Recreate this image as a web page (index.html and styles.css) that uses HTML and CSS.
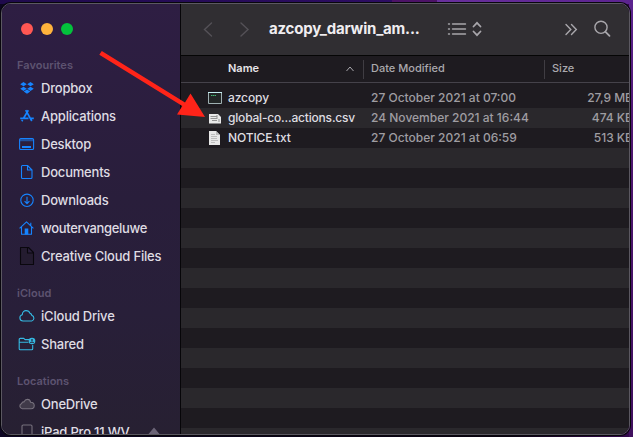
FILE: index.html
```
<!DOCTYPE html>
<html lang="en">
<head>
<meta charset="utf-8">
<title>azcopy_darwin_am...</title>
<link rel="stylesheet" href="styles.css">
</head>
<body>
<div class="window">
  <aside class="sidebar">
    <div class="lights"><i class="red"></i><i class="amber"></i><i class="green"></i></div>
    <h2>Favourites</h2>
    <ul>
      <li><svg class="blue" viewBox="0 0 16 16"><path fill="currentColor" d="M4.500 2 7.800 4.200 4.500 6.300 1.200 4.200zM11.500 2l3.300 2.200-3.300 2.100-3.300-2.100zM4.500 6.700 7.800 8.800 4.500 11 1.200 8.800zM11.500 6.700l3.300 2.100-3.300 2.200-3.300-2.200zM4.700 11.600 8 9.500l3.300 2.100L8 13.700z"/></svg><span>Dropbox</span></li>
      <li><svg class="blue" viewBox="0 0 16 16"><path class="ln b" d="M9.300 2.200 4.700 10M6.700 2.200 12.800 13M1.200 10.300h8.300M12 10.300h2.800M3.600 12l-.8 1.300"/></svg><span>Applications</span></li>
      <li><svg class="blue" viewBox="0 0 16 16"><rect class="ln" x=".6" y="2.500" width="14" height="11" rx="1.300"/><path fill="currentColor" opacity=".5" d="M1 3h13.400v2.200H1z"/><path fill="currentColor" d="M3 10h9v2H3z"/></svg><span>Desktop</span></li>
      <li><svg class="blue" viewBox="0 0 16 16"><path class="ln" d="M3.500 1.500h5L13 6v7.500a1 1 0 0 1-1 1H3.500a1 1 0 0 1-1-1v-11a1 1 0 0 1 1-1zM8.500 1.500V6H13"/></svg><span>Documents</span></li>
      <li><svg class="blue" viewBox="0 0 16 16"><circle class="ln" cx="8" cy="8.300" r="6.200"/><path class="ln" d="M8 4.800v6.700M5.600 9.200 8 11.600l2.400-2.400"/></svg><span>Downloads</span></li>
      <li><svg class="blue" viewBox="0 0 16 16"><path class="ln" d="M.6 8.300 7.500 1.800l6.900 6.500M2.500 7v7.300h10V7M11.800 5.500V2.700"/><path fill="currentColor" d="M5.700 8.500h3.600v6H5.700z"/></svg><span class="tight">woutervangeluwe</span></li>
      <li><svg class="black" viewBox="0 0 16 16"><path class="ln" d="M1.500-.5h8l5 5v12h-13zM8.500-.5v5.500h6"/></svg><span>Creative Cloud Files</span></li>
    </ul>
    <h2>iCloud</h2>
    <ul>
      <li><svg class="cyan" viewBox="0 0 16 16"><path class="ln" d="M4 13a3.200 3.200 0 0 1-.7-6.300C3.300 3.800 5.300 2.600 7 2.600c2 0 3.400 1 4 2.800 1.300.1 1.700 1 1.800 2A2.900 2.900 0 0 1 12.700 13z"/></svg><span>iCloud Drive</span></li>
      <li><svg class="cyan" viewBox="0 0 16 16"><path class="ln" d="M10 3.600H6L4.800 2.400H1.200a1 1 0 0 0-1 1v9.300a1 1 0 0 0 1 1h11.500a1 1 0 0 0 1-1V9M.2 6.200H9.500"/><circle fill="currentColor" cx="13" cy="5" r="3.300"/><path d="M13 3v2M11.400 7q1.600-2 3.200 0" fill="none" stroke="#281f38" stroke-width="1.200"/></svg><span>Shared</span></li>
    </ul>
    <h2>Locations</h2>
    <ul>
      <li><svg class="grey" viewBox="0 0 16 16"><path class="cloud" d="M3.200 12.800a2.800 2.800 0 0 1-.5-5.400c.3-1.200 1.500-1.600 2.300-1.500.8-1.800 2-2.500 3.300-2.500 1.700 0 3 1 3.300 2.900 2.200 0 3.600 1.300 3.600 3.300 0 1.900-1.200 3.200-3 3.200z"/></svg><span>OneDrive</span></li>
      <li><svg class="grey" viewBox="0 0 16 16"><rect class="ln" x="3" y="1" width="10" height="14" rx="1.200"/></svg><span>iPad Pro 11 WV</span><svg class="eject" viewBox="0 0 12 12"><path fill="#6b6477" d="m6 1.500 5.500 6.500H.5zM1 9.500h10v2H1z"/></svg></li>
    </ul>
  </aside>
  <main>
    <header class="toolbar">
      <svg class="nav" viewBox="0 0 50 20"><path d="M8.500 4 1.500 10.500l7 6.500M38 4l7 6.500-7 6.500"/></svg>
      <h1>azcopy_darwin_am...</h1>
      <svg class="view" viewBox="0 0 36 20"><path d="M5.500 5h13M5.500 10h13M5.500 15h13M1.500 5h1M1.500 10h1M1.500 15h1"/><path class="w" d="M26.500 7.500 30 3.800 33.500 7.500M26.500 12.500l3.500 3.700 3.500-3.700"/></svg>
      <svg class="more" viewBox="0 0 14 20"><path d="m2 5.500 4.800 5-4.800 5M7.500 5.500l4.800 5-4.800 5"/></svg>
      <svg class="search" viewBox="0 0 20 20"><circle cx="8" cy="8.300" r="6.100"/><path class="w" d="m12.500 12.800 4 4"/></svg>
    </header>
    <div class="cols head">
      <div class="name"><b>Name</b><svg viewBox="0 0 8 6"><path d="m.5 5 3.500-4 3.500 4"/></svg></div>
      <div class="date"><span>Date Modified</span></div>
      <div class="size"><span>Size</span></div>
    </div>
    <div class="rows">
      <div class="cols row">
        <div class="name"><svg viewBox="0 0 14 14"><path fill="#222626" stroke="#9fb0b2" d="M.5 1.500h13v11H.5z"/><path stroke="#c5edf2" d="M0 1.500h14"/><path stroke="#45b875" stroke-dasharray="1.500 .5" d="M3 4.500h5"/></svg><span>azcopy</span></div>
        <div class="date"><span>27 October 2021 at 07:00</span></div><div class="size"><span>27,9 MB</span></div>
      </div>
      <div class="cols row">
        <div class="name"><svg viewBox="0 0 14 14"><path fill="#e9e9e9" d="M1 3h9l3 3v6.500H1z"/><path stroke="#939393" d="M2.500 5.500H9M2.500 7.500h7M4 9.500h5M11 8v3M9 4v3"/></svg><span class="tight">global-co...actions.csv</span></div>
        <div class="date"><span>24 November 2021 at 16:44</span></div><div class="size"><span>474 KB</span></div>
      </div>
      <div class="cols row">
        <div class="name"><svg viewBox="0 0 14 14"><path fill="#e8e8e8" d="M1 0h7l4 4v10H1z"/><path fill="#bbb" d="M8 0v4h4z"/><path stroke="#aaa" stroke-width=".7" d="M3 3.500h4M3 5.500h6M3 7.500h6M3 9.500h7M3 11.500h4"/></svg><span>NOTICE.txt</span></div>
        <div class="date"><span>27 October 2021 at 06:59</span></div><div class="size"><span>513 KB</span></div>
      </div>
    </div>
  </main>
</div>
<svg class="arrow" viewBox="0 0 633 437"><path fill="#ff2419" d="m101.800 51 83.200 51.500 5.500-9 14.500 23.500-28-2.500 5.300-8.500L99.300 54.800z"/></svg>
</body>
</html>
```
FILE: styles.css
```
* { box-sizing: border-box; }
body {
  margin: 0;
  width: 633px;
  height: 437px;
  overflow: hidden;
  padding: 3px 3px 2px 1px;
  background: linear-gradient(90deg, #1f0a4c, #2c0c62 62%, #4c1266 62%, #4c1266 69%, #68309c 69%, #5b238f) 0 0 / 100% 4px no-repeat,
    linear-gradient(#5c248f, #4f1770 30%, #40105e) 100% 0 / 4px 100% no-repeat,
    linear-gradient(90deg, #0c0522, #08020f 80%, #34094d);
  font-family: Inter, "Liberation Sans", sans-serif;
  font-size: 13px;
  color: #dfdce3;
}
.window {
  display: flex;
  height: 432px;
  border: 1px solid #5b5861;
  border-radius: 10px;
  overflow: hidden;
  box-shadow: 0 0 0 1px #08060c;
}
h1, h2, ul { margin: 0; padding: 0; }
.sidebar {
  flex: none;
  width: 179px;
  border-right: 1px solid #060508;
  background: linear-gradient(180deg, #2e1e43, #291e3b 45%, #281f39 72%, #272032);
}
.lights { display: flex; gap: 8px; padding: 19px 0 0 19px; height: 51px; }
.lights i { width: 12px; height: 12px; border-radius: 50%; }
.red { background: #ff5753; }
.amber { background: #ffb33c; }
.green { background: #03c23c; }
h2 { height: 19px; margin-left: 15px; font-size: 11px; line-height: 20px; font-weight: 600; color: #5d5370; letter-spacing: .02px; }
ul { list-style: none; margin-bottom: 13px; }
li { display: flex; align-items: center; height: 28px; padding-left: 17px; gap: 6px; font-weight: 500; letter-spacing: -.2px; white-space: nowrap; }
li .tight { letter-spacing: -.33px; }
li svg { width: 16px; height: 16px; overflow: visible; flex: none; }
li .eject { width: 12px; height: 12px; margin-left: 12px; }
.ln { fill: none; stroke: currentColor; stroke-width: 1.1; stroke-linejoin: round; }
.cloud { fill: #403a49; stroke: currentColor; stroke-width: 1.1; }
.b { stroke-width: 1.7; }
.blue { color: #1684ff; }
.black { color: #09070d; }
.black .ln { fill: #241c30; }
.cyan { color: #35b9e2; }
.grey { color: #77717d; }
main { flex: 1; min-width: 0; display: flex; flex-direction: column; background: #1e1b20; }
.toolbar { flex: none; height: 52px; display: flex; align-items: center; border-bottom: 1px solid #050505; background: #302e32; padding: 0 0 2px 22px; }
.toolbar svg { height: 20px; fill: none; stroke: #a8a6ab; stroke-width: 1.4; stroke-linecap: round; flex: none; }
.toolbar .nav { width: 50px; stroke: #545157; }
.toolbar .w { stroke-width: 1.8; }
h1 { width: 151px; margin-left: 16px; font-size: 15px; font-weight: 700; letter-spacing: -.2px; white-space: nowrap; color: #efedf0; }
.view { width: 36px; margin-left: 27px; }
.more { width: 14px; margin-left: 81px; }
.search { width: 20px; margin-left: 15px; }
.cols { display: grid; grid-template-columns: 182px 181px 1fr; align-items: center; white-space: nowrap; }
.head { flex: none; height: 27px; border-bottom: 1px solid #45424a; font-size: 11px; font-weight: 500; color: #aaa8ad; }
.head > div { height: 19px; line-height: 17px; padding-left: 7px; }
.head > div + div { border-left: 1px solid #403d43; }
.head .name { display: flex; align-items: center; justify-content: space-between; padding: 0 9px 1px 47px; color: #e6e4e8; }
.head svg { width: 8px; height: 6px; fill: none; stroke: #aaa8ad; }
b { font-weight: 600; }
.rows { flex: 1; border-top: 5px solid #1e1b20; background: repeating-linear-gradient(#1e1b20 0 20px, #2a282c 20px 40px); }
.row { height: 20px; font-size: 12px; font-weight: 500; line-height: 18px; color: #9f9da2; }
.row .name { display: flex; align-items: center; gap: 6px; padding-left: 27px; color: #dfdde1; letter-spacing: -.1px; }
.row .name .tight { letter-spacing: -.19px; }
.row .name svg { width: 14px; height: 14px; fill: none; flex: none; }
.row .date { padding-left: 8px; }
.row .size { padding-left: 41px; overflow: hidden; }
.row .size span { display: block; width: 48px; text-align: right; }
.arrow { position: absolute; left: 0; top: 0; width: 633px; height: 437px; pointer-events: none; }
```
